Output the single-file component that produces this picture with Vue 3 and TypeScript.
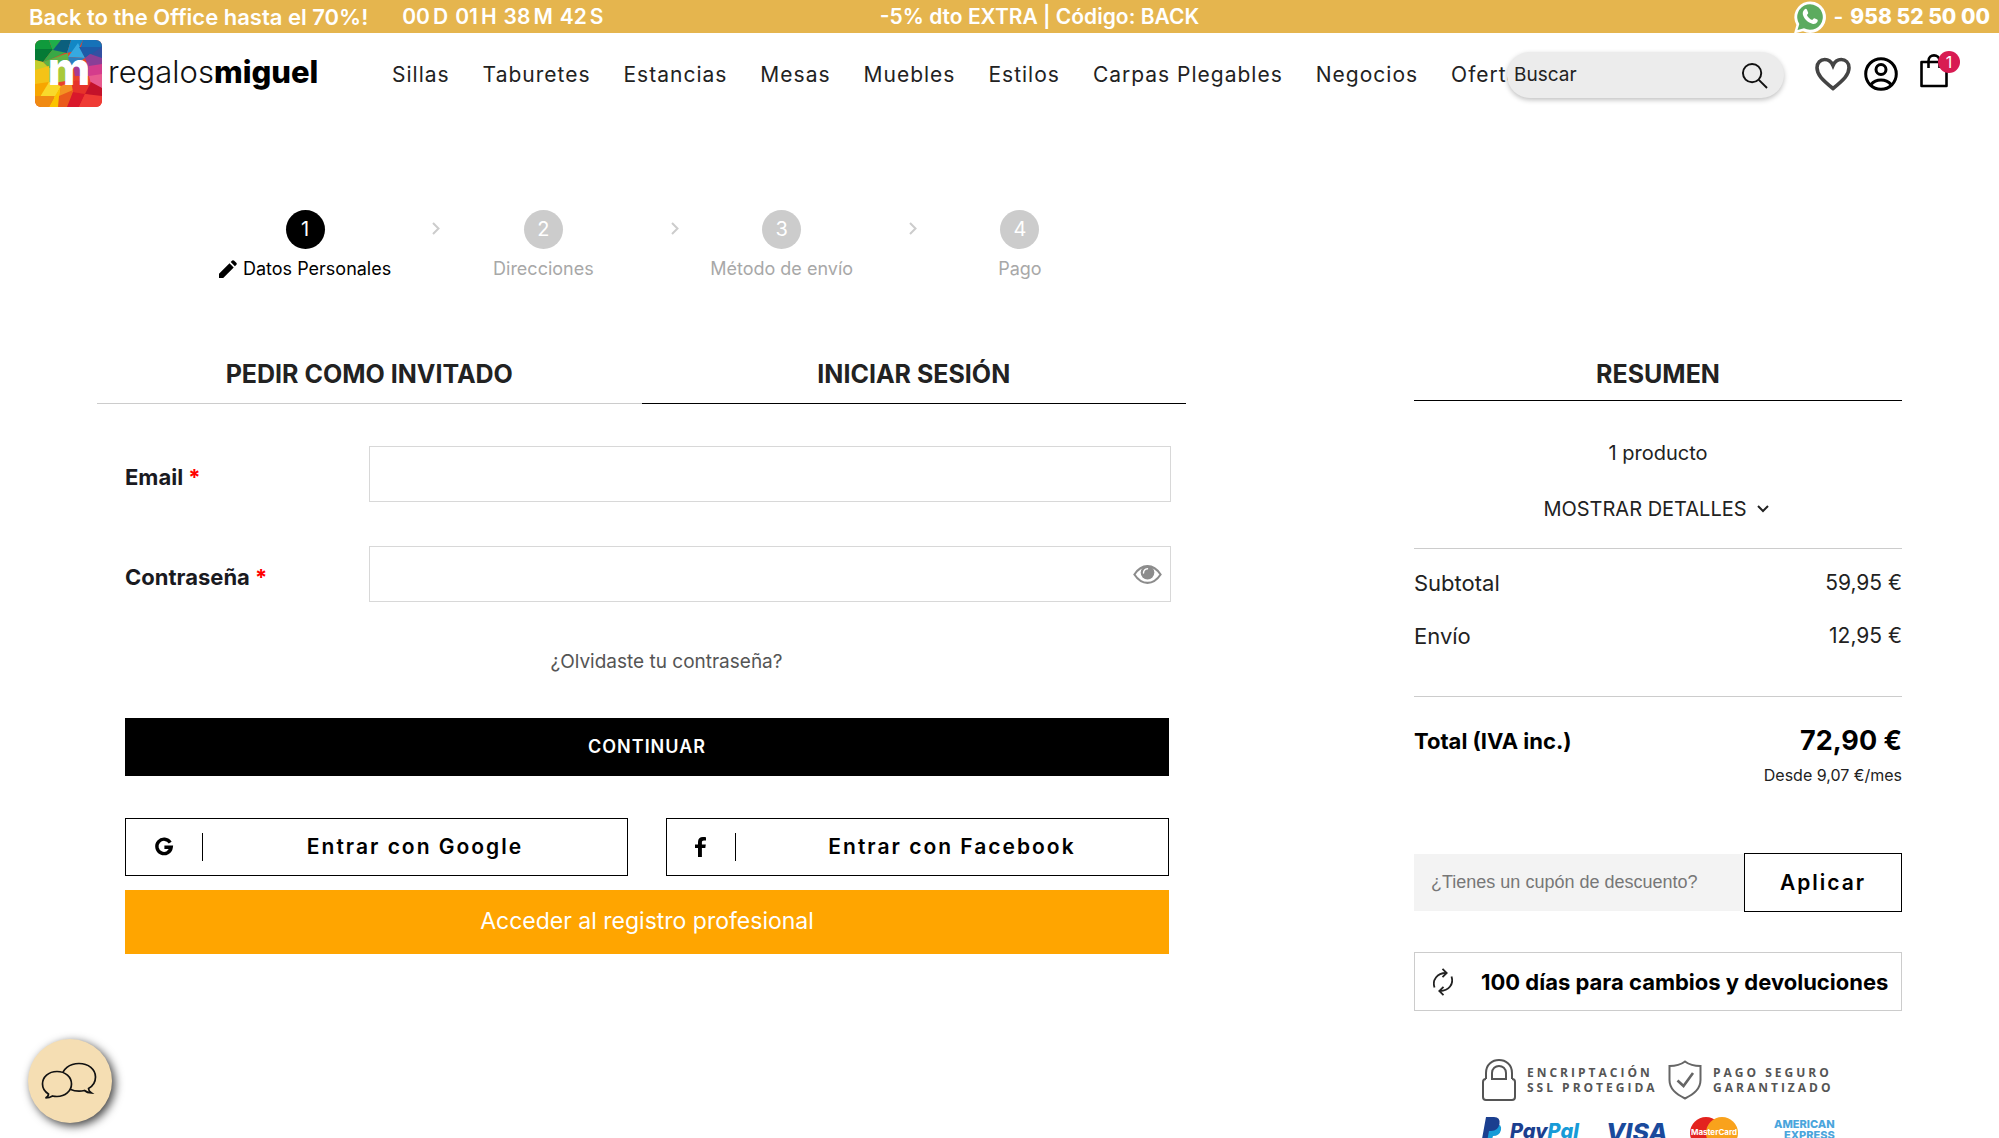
<script setup lang="ts">
import { ref } from 'vue'

interface Step {
  label: string
  active: boolean
}

const categories: string[] = [
  'Sillas', 'Taburetes', 'Estancias', 'Mesas', 'Muebles',
  'Estilos', 'Carpas Plegables', 'Negocios', 'Ofertas',
]

const steps: Step[] = [
  { label: 'Datos Personales', active: true },
  { label: 'Direcciones', active: false },
  { label: 'Método de envío', active: false },
  { label: 'Pago', active: false },
]

const search = ref('')
const email = ref('')
const password = ref('')
const coupon = ref('')
const showPassword = ref(false)
</script>

<template>
  <div class="page">
    <div class="banner">
      <div class="banner-side banner-start">
        <span class="promo">Back to the Office hasta el 70%!</span>
        <span class="countdown">
          <span><b>00</b>D</span>
          <span><b>01</b>H</span>
          <span><b>38</b>M</span>
          <span><b>42</b>S</span>
        </span>
      </div>
      <span class="code">-5% dto EXTRA | Código: BACK</span>
      <div class="banner-side banner-end">
        <svg class="whatsapp" viewBox="0 0 34 34" aria-hidden="true">
          <path d="M1 33.500 L3.400 25 A15.800 15.800 0 1 1 10 31.300 Z" fill="#fff" />
          <path d="M4.500 30 L6.300 24 A12.800 12.800 0 1 1 11 28.300 Z" fill="#5cab5f" />
          <path d="M11.500 9.500 c1-1 2-.8 2.500.3 l1.200 2.900 c.3.700-.9 1.700-1.300 2.300 1.100 2.400 2.900 4 5.300 5 .8-.7 1.400-2 2.200-1.700 l2.800 1.300 c.9.500.6 1.600.1 2.500 -1.100 1.700-3.100 2.200-5 1.700 -5-1.500-8.600-5.200-9.500-9.500 -.2-2 .5-3.700 1.700-4.800z" fill="#fff" />
        </svg>
        <span>-</span>
        <a class="phone" href="tel:958525000">958 52 50 00</a>
      </div>
    </div>

    <header class="header">
      <a class="logo" href="#">
        <svg class="logo-mark" viewBox="0 0 67 67" aria-hidden="true">
          <defs><clipPath id="tile"><rect width="67" height="67" rx="6" /></clipPath></defs>
          <g clip-path="url(#tile)">
            <rect width="67" height="67" fill="#e8432a" />
            <polygon points="0,0 14,0 18,11 0,12" fill="#0f9a3c" />
            <polygon points="14,0 26,0 18,11" fill="#1fae4a" />
            <polygon points="0,9 18,9 8,22 0,20" fill="#057a35" />
            <polygon points="18,9 32,12 14,20 8,22" fill="#39a845" />
            <polygon points="26,0 36,0 32,13 18,10" fill="#0b5f7d" />
            <polygon points="36,0 48,0 43,10 32,13" fill="#1187c5" />
            <polygon points="43,3 50,18 33,17" fill="#36a9e1" />
            <polygon points="48,0 67,0 67,8 46,7" fill="#1672b8" />
            <polygon points="67,6 67,20 55,14" fill="#3350a2" />
            <polygon points="44,7 67,7 55,15 50,18" fill="#1d5ba8" />
            <polygon points="33,17 50,18 38,26 24,24" fill="#2b7fc0" />
            <polygon points="8,22 33,13 34,25 14,28" fill="#5db245" />
            <polygon points="0,20 8,22 14,28 0,36" fill="#c3cf2c" />
            <polygon points="50,18 55,14 67,18 67,27 54,28" fill="#8a3f97" />
            <polygon points="38,25 54,22 54,36 40,36" fill="#a63b92" />
            <polygon points="54,26 67,24 67,38 54,36" fill="#d43c8c" />
            <polygon points="54,36 67,34 67,50 56,44" fill="#e85a8f" />
            <polygon points="0,30 14,26 14,44 0,46" fill="#f4c317" />
            <polygon points="14,28 38,25 36,40 14,44" fill="#a8c93a" />
            <polygon points="0,44 14,42 6,58 0,56" fill="#f7a600" />
            <polygon points="14,42 26,46 20,58 5,57" fill="#f9d92b" />
            <polygon points="0,56 20,56 14,67 0,67" fill="#f08a12" />
            <polygon points="14,67 20,56 26,46 24,67" fill="#fbc400" />
            <polygon points="26,46 40,40 38,52 24,58" fill="#f39322" />
            <polygon points="24,56 38,50 34,67 23,67" fill="#ea5b1b" />
            <polygon points="36,40 56,42 50,54 38,52" fill="#e6332a" />
            <polygon points="56,42 67,48 67,58 50,54" fill="#c4122a" />
            <polygon points="38,52 50,54 44,67 32,67" fill="#d9182b" />
            <polygon points="50,54 67,56 67,67 44,67" fill="#ef3b35" />
          </g>
          <text x="34" y="45" text-anchor="middle" class="logo-m">m</text>
        </svg>
        <span class="logo-text">regalos<b>miguel</b></span>
      </a>

      <nav class="nav">
        <a v-for="item in categories" :key="item" href="#">{{ item }}</a>
      </nav>

      <form class="search" @submit.prevent>
        <input v-model="search" type="text" placeholder="Buscar" aria-label="Buscar" />
        <button type="submit" aria-label="Buscar">
          <svg width="27" height="27" viewBox="0 0 28 28" fill="none" stroke="#111" stroke-width="2">
            <circle cx="11.500" cy="11.500" r="9.500" />
            <path d="M18.500 18.500 L27 27" />
          </svg>
        </button>
      </form>

      <div class="tools">
        <a href="#" aria-label="Favoritos">
          <svg width="36" height="34" viewBox="0 0 36 34" fill="none" stroke="#444" stroke-width="3.600">
            <path d="M18 31.500 C7 22.500 2 17.500 2 10.800 C2 5.500 5.500 2.500 9.700 2.500 C13.500 2.500 16.500 5 18 8.500 C19.500 5 22.500 2.500 26.300 2.500 C30.500 2.500 34 5.500 34 10.800 C34 17.500 29 22.500 18 31.500 Z" />
          </svg>
        </a>
        <a href="#" aria-label="Mi cuenta">
          <svg width="34" height="34" viewBox="0 0 34 34" fill="none" stroke="#000" stroke-width="3">
            <circle cx="17" cy="17" r="15.300" />
            <circle cx="17" cy="12.500" r="5" />
            <path d="M7 27.500 C12 21.500 22 21.500 27 27.500" />
          </svg>
        </a>
        <a class="bag" href="#" aria-label="Cesta">
          <svg width="28" height="34" viewBox="0 0 28 34" fill="none" stroke="#000" stroke-width="2.600">
            <path d="M1.500 8 H26.500 V32 H1.500 Z" stroke-linejoin="round" />
            <path d="M8.500 14 V7 C8.500 -.5 19.500 -.5 19.500 7 V14" />
          </svg>
          <span class="badge">1</span>
        </a>
      </div>
    </header>

    <main class="main">
      <section class="checkout">
        <ol class="steps">
          <li v-for="(step, i) in steps" :key="step.label" :class="{ active: step.active }">
            <span class="dot">{{ i + 1 }}</span>
            <span class="step-label">
              <svg v-if="step.active" width="18" height="18" viewBox="0 0 18 18" aria-hidden="true">
                <path d="M0 18 V13.800 L10.500 3.300 L14.700 7.500 L4.200 18 Z M11.700 2.100 L13.200 .6 Q14.200 -.2 15.200 .7 L17.300 2.800 Q18.200 3.800 17.400 4.800 L15.900 6.300 Z" fill="#000" />
              </svg>
              {{ step.label }}
            </span>
            <svg v-if="i < steps.length - 1" class="step-arrow" width="8" height="13" viewBox="0 0 8 13" fill="none" stroke="#ccc" stroke-width="2" aria-hidden="true">
              <path d="M1 1 L6.500 6.500 L1 12" />
            </svg>
          </li>
        </ol>

        <div class="tabs" role="tablist">
          <button type="button" role="tab" aria-selected="false">PEDIR COMO INVITADO</button>
          <button type="button" role="tab" aria-selected="true" class="selected">INICIAR SESIÓN</button>
        </div>

        <form class="login" @submit.prevent>
          <div class="field">
            <label for="email">Email <i>*</i></label>
            <input id="email" v-model="email" type="email" />
          </div>
          <div class="field">
            <label for="password">Contraseña <i>*</i></label>
            <div class="password">
              <input id="password" v-model="password" :type="showPassword ? 'text' : 'password'" />
              <button type="button" aria-label="Mostrar contraseña" @click="showPassword = !showPassword">
                <svg width="29" height="19" viewBox="0 0 30 20" aria-hidden="true">
                  <path d="M1.200 10 Q7 1.200 15 1.200 Q23 1.200 28.800 10 Q23 18.800 15 18.800 Q7 18.800 1.200 10 Z" fill="none" stroke="#8c8c8c" stroke-width="2.200" />
                  <circle cx="15" cy="8" r="7.200" fill="#8c8c8c" />
                  <path d="M10.800 8.500 Q11 4.300 15 4" fill="none" stroke="#fff" stroke-width="1.500" stroke-linecap="round" />
                </svg>
              </button>
            </div>
          </div>
          <a class="forgot" href="#">¿Olvidaste tu contraseña?</a>
          <button class="continue" type="submit">CONTINUAR</button>
          <div class="social">
            <button type="button">
              <span class="social-icon">
                <svg width="20" height="20" viewBox="0 0 20 20" aria-hidden="true">
                  <path d="M16.200 5.600 A7.200 7.200 0 1 0 17.200 10.300 H10.400" fill="none" stroke="#000" stroke-width="3.400" />
                </svg>
              </span>
              <span class="social-label">Entrar con Google</span>
            </button>
            <button type="button">
              <span class="social-icon">
                <svg width="12" height="20" viewBox="0 0 12 20" aria-hidden="true">
                  <path d="M3 20 V11 H0 V7.400 H3 V5 C3 1.800 4.900 0 7.900 0 C9.300 0 10.600 .2 11 .2 V3.400 H9 C7.300 3.400 6.900 4.200 6.900 5.400 V7.400 H10.800 L10.300 11 H6.900 V20 Z" fill="#000" />
                </svg>
              </span>
              <span class="social-label">Entrar con Facebook</span>
            </button>
          </div>
          <a class="professional" href="#">Acceder al registro profesional</a>
        </form>
      </section>

      <aside class="summary">
        <h2>RESUMEN</h2>
        <p class="count">1 producto</p>
        <button class="details" type="button">
          MOSTRAR DETALLES
          <svg width="12" height="8" viewBox="0 0 12 8" fill="none" stroke="#222" stroke-width="2" aria-hidden="true">
            <path d="M1 1 L6 6 L11 1" />
          </svg>
        </button>
        <dl class="costs">
          <div><dt>Subtotal</dt><dd>59,95 €</dd></div>
          <div><dt>Envío</dt><dd>12,95 €</dd></div>
        </dl>
        <dl class="total">
          <div><dt>Total (IVA inc.)</dt><dd>72,90 €</dd></div>
        </dl>
        <p class="monthly">Desde 9,07 €/mes</p>

        <form class="coupon" @submit.prevent>
          <input v-model="coupon" type="text" placeholder="¿Tienes un cupón de descuento?" aria-label="Cupón de descuento" />
          <button type="submit">Aplicar</button>
        </form>

        <div class="returns">
          <svg width="20" height="28" viewBox="0 0 20 28" fill="none" stroke="#222" stroke-width="1.800" aria-hidden="true">
            <path d="M1.500 19.500 C-1 12 4 5 13 5" />
            <path d="M9.500 .8 L13.700 5 L9.500 9.200" />
            <path d="M18.500 8.500 C21 16 16 23 7 23" />
            <path d="M10.500 18.800 L6.300 23 L10.500 27.200" />
          </svg>
          <span>100 días para cambios y devoluciones</span>
        </div>

        <div class="trust">
          <div class="seals">
            <svg width="34" height="42" viewBox="0 0 34 42" fill="none" stroke="#555" stroke-width="2" aria-hidden="true">
              <path d="M4 20 V14 C4 -3.300 30 -3.300 30 14 V20" />
              <path d="M10 20 V14 C10 4.500 24 4.500 24 14 V20 Z" />
              <path d="M4 20 Q1 20 1 23 V38 Q1 41 4 41 H30 Q33 41 33 38 V23 Q33 20 30 20" />
            </svg>
            <span class="seal-first">ENCRIPTACIÓN<br />SSL PROTEGIDA</span>
            <svg width="34" height="40" viewBox="0 0 34 40" fill="none" stroke="#666" stroke-width="2" aria-hidden="true">
              <path d="M17 1.500 Q11 6 1.500 6 V20 C1.500 29 8 34 17 38.500 C26 34 32.500 29 32.500 20 V6 Q23 6 17 1.500 Z" />
              <path d="M9.500 20.500 L15.500 26 L25 13" stroke-width="2.600" />
            </svg>
            <span>PAGO SEGURO<br />GARANTIZADO</span>
          </div>
          <div class="cards">
            <span class="paypal">
              <svg width="20" height="24" viewBox="0 0 20 24" aria-hidden="true">
                <path d="M7 7 H14 Q20 7 19 13 Q17.500 19 11 19 L9.500 24 H4 Z" fill="#179bd7" />
                <path d="M4 0 H12 Q18.500 0 17.500 7 Q16 14 9 14 H7 L5.500 22 H0 Z" fill="#1b3f8f" />
              </svg>
              <b>Pay<i>Pal</i></b>
            </span>
            <b class="visa">VISA</b>
            <svg class="mastercard" width="48" height="32" viewBox="0 0 48 32" aria-label="MasterCard">
              <circle cx="16" cy="16" r="16" fill="#e3231f" />
              <circle cx="32" cy="16" r="16" fill="#f9a21c" />
              <text x="24" y="18" text-anchor="middle">MasterCard</text>
            </svg>
            <b class="amex">AMERICAN<br />EXPRESS</b>
          </div>
        </div>
      </aside>
    </main>

    <button class="chat" type="button" aria-label="Abrir chat">
      <svg width="56" height="38" viewBox="0 0 56 38" stroke="#111" stroke-width="1.700" aria-hidden="true">
        <path d="M38 1.500 C47.500 1.500 54.500 7.500 54.500 15 C54.500 19.500 52 24 47.500 26.500 Q47.500 29 50.500 31 Q46 30.800 43.500 28.500 C35 30.500 21 27.500 21 15 C21 7.500 28.500 1.500 38 1.500 Z" fill="none" />
        <path d="M16 9.500 C24.500 9.500 30.500 15 30.500 22 C30.500 29 24 34.500 16 34.500 Q13.500 34.500 11.500 34 Q8.500 36 4.500 36 Q7.500 34.500 7.500 32 C3.500 29.500 1.500 26 1.500 22 C1.500 15 7.500 9.500 16 9.500 Z" fill="#f5deb3" />
      </svg>
    </button>
  </div>
</template>

<style>
body {
  margin: 0;
  background: #fff;
}
</style>

<style scoped>
.page {
  position: relative;
  min-height: 100vh;
  font-family: Inter, "Liberation Sans", sans-serif;
  font-size: 20px;
  line-height: 24px;
  color: #222;
}
.page * {
  box-sizing: border-box;
}
a {
  color: inherit;
  text-decoration: none;
}
button,
input {
  font: inherit;
  color: inherit;
  border: 0;
  border-radius: 0;
  background: none;
  padding: 0;
  margin: 0;
}
svg {
  display: block;
  flex: none;
}

.banner {
  display: flex;
  align-items: center;
  height: 33px;
  padding: 0 9px 0 29px;
  background: #e5b54e;
  color: #fff;
  font-size: 21px;
  font-weight: 600;
  white-space: nowrap;
}
.banner-side {
  display: flex;
  flex: 1 1 0;
  align-items: center;
}
.banner-start {
  gap: 34px;
}
.promo {
  font-size: 22px;
}
.code {
  padding-left: 60px;
}
.banner-end {
  justify-content: flex-end;
  gap: 7px;
}
.countdown {
  display: flex;
  gap: 7px;
}
.countdown b {
  font-weight: 600;
  margin-right: 3px;
}
.whatsapp {
  width: 34px;
  height: 34px;
}
.phone {
  font-weight: 800;
}

.header {
  display: flex;
  align-items: flex-start;
  height: 97px;
  padding: 0 51px 0 35px;
}
.logo {
  display: flex;
  gap: 6px;
  width: 357px;
  flex: none;
  padding-top: 7px;
}
.logo-mark {
  width: 67px;
  height: 67px;
}
.logo-m {
  font-size: 46px;
  font-weight: 800;
  fill: #fff;
}
.logo-text {
  font-size: 31px;
  line-height: 64px;
  font-weight: 300;
  color: #111;
}
.logo-text b {
  font-weight: 800;
  color: #000;
}
.nav {
  display: flex;
  flex: 1 1 0;
  min-width: 0;
  gap: 33px;
  margin-right: -8px;
  padding-top: 30px;
  overflow: hidden;
  white-space: nowrap;
  font-size: 21px;
  letter-spacing: 1px;
}
.search {
  position: relative;
  display: flex;
  align-items: center;
  width: 277px;
  height: 46px;
  margin-top: 19px;
  padding: 0 16px 0 7px;
  border-radius: 23px;
  background: #ececec;
  box-shadow: 0 2px 5px rgba(0, 0, 0, 0.25);
}
.search input {
  flex: 1 1 0;
  min-width: 0;
  font-size: 19px;
}
.search input::placeholder {
  color: #222;
  opacity: 1;
}
.tools {
  display: flex;
  align-items: center;
  gap: 13px;
  padding: 21px 0 0 31px;
}
.bag {
  position: relative;
  margin-left: 9px;
  padding-bottom: 6px;
}
.badge {
  position: absolute;
  top: -3px;
  right: -12px;
  width: 22px;
  height: 22px;
  border-radius: 50%;
  background: #d81b52;
  color: #fff;
  font-size: 16px;
  line-height: 22px;
  text-align: center;
}

.main {
  display: grid;
  grid-template-columns: minmax(0, 1089fr) minmax(0, 488fr);
  gap: 228px;
  padding: 80px 97px 0;
}
.steps {
  display: flex;
  height: 128px;
  margin: 0;
  padding: 0 47px 0 89px;
  list-style: none;
}
.steps li {
  position: relative;
  display: flex;
  flex: 1 1 0;
  flex-direction: column;
  align-items: center;
  gap: 8px;
  color: #a8a8a8;
}
.steps li.active {
  color: #000;
}
.dot {
  width: 39px;
  height: 39px;
  border-radius: 50%;
  background: #ccc;
  color: #fff;
  line-height: 39px;
  text-align: center;
}
.active .dot {
  background: #000;
}
.step-label {
  display: flex;
  align-items: center;
  gap: 6px;
  font-size: 18px;
  white-space: nowrap;
}
.step-arrow {
  position: absolute;
  top: 12px;
  right: -16px;
}

.tabs {
  display: flex;
}
.tabs button {
  flex: 1 1 0;
  height: 66px;
  padding-top: 7px;
  border-bottom: 1px solid #ccc;
  font-size: 25px;
  font-weight: 700;
  cursor: pointer;
}
.tabs .selected {
  border-color: #000;
}
.login {
  display: flex;
  flex-direction: column;
  padding: 42px 15px 0 28px;
}
.field {
  display: grid;
  grid-template-columns: 244px minmax(0, 1fr);
  height: 56px;
  margin-bottom: 44px;
}
.field label {
  padding-top: 19px;
  font-size: 22px;
  font-weight: 700;
  color: #1a1a1f;
}
.field i {
  font-style: normal;
  color: #f00;
}
.field input {
  width: 100%;
  height: 56px;
  padding: 0 16px;
  border: 1px solid #d8d8d8;
}
.password {
  position: relative;
}
.password button {
  position: absolute;
  top: 19px;
  right: 9px;
  cursor: pointer;
}
.forgot {
  align-self: center;
  margin: 4px 0 44px;
  padding-left: 37px;
  font-size: 19px;
  color: #555;
}
.continue {
  height: 58px;
  background: #000;
  color: #fff;
  font-size: 18px;
  font-weight: 600;
  letter-spacing: 1px;
  cursor: pointer;
}
.social {
  display: grid;
  grid-template-columns: 1fr 1fr;
  gap: 38px;
  margin: 42px 0 14px;
}
.social button {
  display: flex;
  align-items: center;
  height: 58px;
  border: 1px solid #000;
  font-size: 21px;
  font-weight: 600;
  letter-spacing: 2px;
  color: #000;
  cursor: pointer;
}
.social-icon {
  display: flex;
  align-items: center;
  height: 28px;
  padding: 0 28px;
  border-right: 1px solid #000;
}
.social-label {
  flex: 1 1 0;
}
.professional {
  height: 64px;
  background: #ffa500;
  color: #fff;
  font-size: 23px;
  line-height: 62px;
  text-align: center;
}
.continue,
.social,
.professional {
  margin-right: 2px;
}

.summary {
  padding-top: 128px;
}
.summary h2 {
  height: 63px;
  margin: 0;
  border-bottom: 1px solid #000;
  font-size: 25px;
  line-height: 72px;
  font-weight: 700;
  text-align: center;
}
.summary p {
  margin: 0;
}
.summary .count {
  padding-top: 40px;
  text-align: center;
}
.details {
  display: flex;
  align-items: center;
  justify-content: center;
  gap: 10px;
  width: 100%;
  height: 84px;
  padding: 4px 4px 0 0;
  border-bottom: 1px solid #ccc;
  cursor: pointer;
}
.costs,
.total {
  margin: 0;
}
.costs {
  height: 148px;
  padding-top: 22px;
  border-bottom: 1px solid #ccc;
  font-size: 22px;
}
.costs div,
.total div {
  display: flex;
  justify-content: space-between;
  align-items: center;
}
.costs div {
  height: 24px;
  margin-bottom: 29px;
}
.costs dd,
.total dd {
  margin: 0;
}
.costs dd {
  font-size: 21px;
}
.total {
  padding-top: 28px;
  color: #000;
  font-size: 22px;
  font-weight: 700;
}
.total dd {
  font-size: 27px;
  line-height: 32px;
}
.summary .monthly {
  padding-top: 6px;
  font-size: 16px;
  text-align: right;
}
.coupon {
  display: flex;
  height: 59px;
  margin-top: 66px;
}
.coupon input {
  flex: 1 1 0;
  min-width: 0;
  height: 57px;
  margin: 1px 0;
  padding: 0 17px;
  background: #f3f3f3;
  font-family: "Liberation Sans", Arial, sans-serif;
  font-size: 18px;
}
.coupon input::placeholder {
  color: #777;
  opacity: 1;
}
.coupon button {
  width: 158px;
  border: 1px solid #000;
  color: #000;
  font-size: 21px;
  font-weight: 600;
  letter-spacing: 2px;
  cursor: pointer;
}
.returns {
  display: flex;
  align-items: center;
  gap: 28px;
  height: 59px;
  margin-top: 40px;
  padding-left: 18px;
  border: 1px solid #ccc;
  color: #000;
  font-size: 22px;
  font-weight: 700;
  white-space: nowrap;
}

.trust {
  width: 360px;
  height: 125px;
  margin: 48px auto 0;
  padding-left: 4px;
  overflow: hidden;
}
.seals {
  display: flex;
  align-items: center;
  gap: 11px;
  font-family: "Open Sans", "Noto Sans", sans-serif;
  font-size: 12px;
  line-height: 15px;
  font-weight: 700;
  letter-spacing: 3px;
  color: #555;
  white-space: nowrap;
}
.seal-first {
  width: 130px;
}
.cards {
  display: flex;
  align-items: flex-start;
  margin-top: 16px;
}
.paypal {
  display: flex;
  gap: 8px;
  width: 124px;
}
.paypal b {
  padding-top: 2px;
  color: #1b3f8f;
  font-style: italic;
  font-weight: 800;
}
.paypal i {
  color: #179bd7;
}
.visa {
  width: 84px;
  padding-top: 3px;
  color: #1a4a9c;
  font-size: 25px;
  font-style: italic;
  font-weight: 800;
}
.mastercard text {
  fill: #fff;
  font-size: 8px;
  font-weight: 700;
}
.amex {
  margin: 2px 0 0 36px;
  color: #4aa5dc;
  font-size: 11px;
  line-height: 11px;
  font-weight: 800;
  text-align: right;
}

.chat {
  position: fixed;
  bottom: 15px;
  left: 28px;
  display: flex;
  align-items: center;
  justify-content: center;
  width: 84px;
  height: 84px;
  padding-right: 3px;
  border-radius: 50%;
  background: #f5deb3;
  box-shadow: 3px 3px 10px rgba(0, 0, 0, 0.75);
  cursor: pointer;
}
</style>
